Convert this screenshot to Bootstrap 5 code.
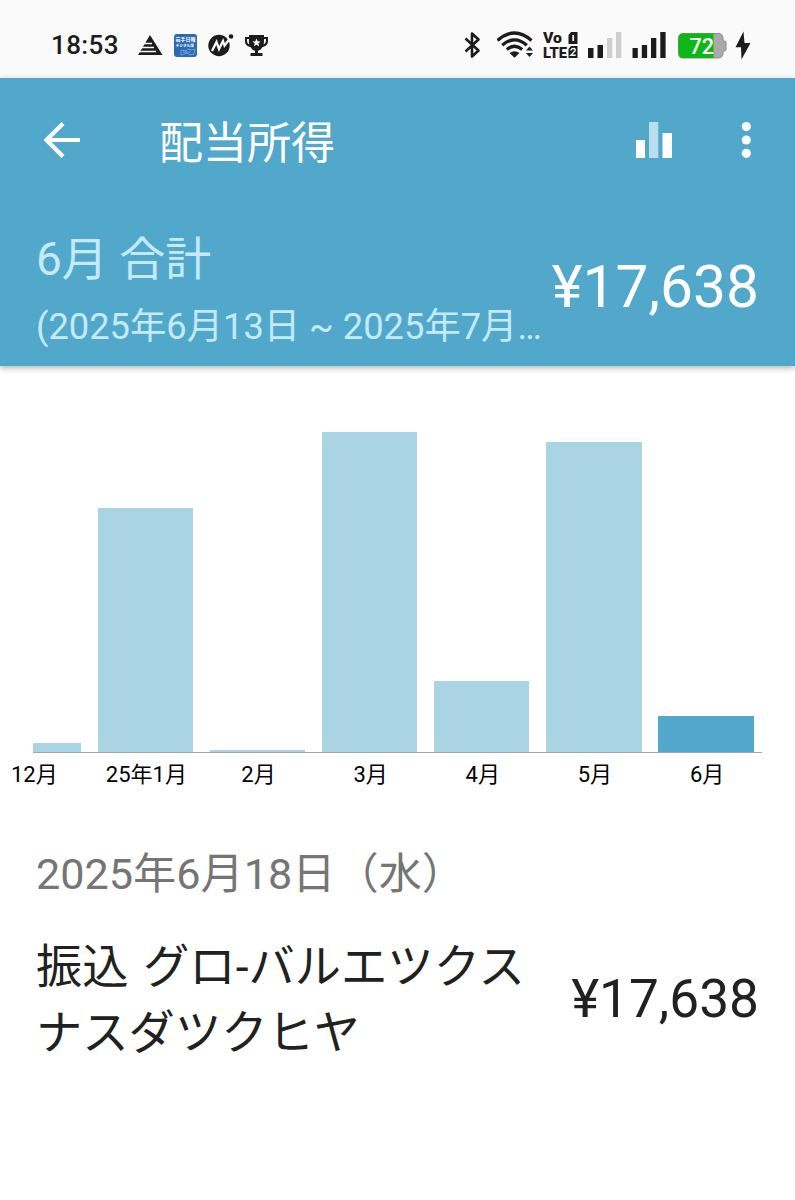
<!DOCTYPE html>
<html lang="ja">
<head>
    <meta charset="UTF-8">
    <meta name="viewport" content="width=device-width, initial-scale=1.0">
    <link href="https://cdn.jsdelivr.net/npm/bootstrap@5.3.2/dist/css/bootstrap.min.css" rel="stylesheet">
    <title>配当所得</title>
    <style>
        body {
            font-family: Roboto, "Noto Sans CJK JP", sans-serif;
            color: #212121;
            background: #fff;
            overflow-x: hidden;
        }
        svg { display: block; flex: none; }

        .status-bar { height: 78px; padding: 27px 43px 0 51px; background: #fafafa; color: #1c1c1c; }
        .status-bar svg { height: 36px; }
        .clock { width: 86px; font-size: 26px; font-weight: 500; letter-spacing: .4px; line-height: 36px; }

        .app-header { height: 288px; background: #51a8cb; color: #fff; box-shadow: 0 2px 6px rgba(0, 0, 0, .3); }
        .toolbar { height: 124px; padding: 0 43px 0 44px; }
        .toolbar-title { margin-left: 79px; font-size: 44px; font-weight: 400; line-height: 64px; letter-spacing: 0; padding-top: 8px; }
        .icon-button { padding: 0; border: 0; background: none; color: #fff; }
        .summary { padding: 23px 36px 0; }
        .summary-text { width: 508px; color: #c4eafb; }
        .summary-label { font-size: 46px; line-height: 68px; }
        .summary-range { font-size: 36.3px; line-height: 54px; margin-top: 7px; }
        .summary-total { font-size: 58.7px; line-height: 70px; margin-top: 27px; }

        .bars { height: 386px; }
        .bar-col { width: 112.15px; padding: 0 8.4px; }
        .bar-col:first-child { width: 89.3px; padding-left: 33px; }
        .bar-fill { background: #aad4e3; }
        .bar-fill.current { background: #51a8cb; }
        .axis-line { height: 1px; margin: 0 33px; background: #a5a5a5; }
        .axis { padding-top: 5px; font-size: 22px; line-height: 34px; color: #000; }
        .axis span { width: 112.15px; padding-left: 2px; text-align: center; }
        .axis span:first-child { width: 89.3px; padding-left: 11px; text-align: left; }

        .day-heading { margin: 51px 36px 0; font-size: 43.2px; font-weight: 400; line-height: 64px; color: #757575; }
        .entry { padding: 27px 36px 0; }
        .entry-name { width: 510px; font-size: 46.3px; line-height: 66px; word-spacing: 3px; }
        .entry-amount { font-size: 53.2px; line-height: 64px; margin-top: -2px; }
    </style>
</head>
<body>
    <div class="status-bar d-flex align-items-start">
        <div class="clock">18:53</div>
        <svg width="37" viewBox="137 27 37 36">
            <path d="M150 35L162.500 55H138Z" fill="#1c1c1c"/>
            <path d="M140 43.500h12M138 47.500h16M136 51.500h20" stroke="#fafafa" stroke-width="1.300"/>
        </svg>
        <svg width="33" viewBox="174 27 33 36">
            <rect x="174" y="34" width="23" height="23" rx="3" fill="#2e68b0"/>
            <text x="175.500" y="41.300" font-size="5" font-weight="700" textLength="20" fill="#fff">岩手日報</text>
            <text x="175.800" y="46.900" font-size="3.600" font-weight="700" textLength="18" fill="#fff">デジタル版</text>
            <path d="M181 55v-5l5 1 2-2 4 1 3-1-1 5-4 1-3-2zM183 52h8" fill="none" stroke="#82aee0" stroke-width=".8"/>
        </svg>
        <svg width="36" viewBox="207 27 36 36">
            <circle cx="219" cy="45.500" r="10.700" fill="#1c1c1c"/>
            <circle cx="231" cy="36.500" r="2.300" fill="#1c1c1c"/>
            <path d="M212 51l4.500-9 2.500 7 4-8 1.500 4.500 5.500-7" fill="none" stroke="#fafafa" stroke-width="2.300"/>
        </svg>
        <svg width="27" viewBox="243 27 27 36">
            <path d="M249 35h15v2h4v3.500c0 4-2 6-5.500 6.500-1 2-2.500 3.300-4.500 3.800V53h4.500v3h-12v-3h4.500v-2.200c-2-.5-3.500-1.800-4.500-3.800-3.500-.5-5.500-2.500-5.500-6.500V37h4zM247 39v1.500c0 2 .8 3.300 2.300 4-.4-1.500-.4-3.500-.4-5.500zM264 39c0 2 0 4-.4 5.500 1.500-.7 2.300-2 2.300-4V39z" fill="#1c1c1c" fill-rule="evenodd"/>
            <path d="M256.500 38.500l1.200 2.700 2.900.3-2.200 1.900.7 2.900-2.600-1.500-2.500 1.500.7-2.900-2.200-1.900 2.900-.3z" fill="#fafafa"/>
        </svg>

        <svg class="ms-auto" width="34" viewBox="463 27 34 36">
            <path d="M465.500 38.500l13 12-6.500 6V33.500l6.500 6-13 12" fill="none" stroke="#1c1c1c" stroke-width="2.600" stroke-linejoin="round"/>
        </svg>
        <svg width="46" viewBox="497 27 46 36">
            <g fill="none" stroke="#1c1c1c" stroke-width="3.200">
                <path d="M497.500 40.500Q514.500 25.500 531.500 40.500"/>
                <path d="M502.200 45.200Q514.500 34.500 526.800 45.200"/>
                <path d="M506.800 49.500Q514.500 43 522.200 49.500"/>
            </g>
            <path d="M509.500 53q5-3.700 10 0l-5 4.800zM526 50.500l3.500-4 3.500 4zM526 53l3.500 4 3.500-4z" fill="#1c1c1c"/>
        </svg>
        <svg width="45" viewBox="543 27 45 36">
            <g fill="#1c1c1c" font-weight="900" font-family="Roboto, sans-serif">
                <text x="543" y="43" font-size="14.500" textLength="19" lengthAdjust="spacingAndGlyphs">Vo</text>
                <text x="543" y="57.800" font-size="15" textLength="24" lengthAdjust="spacingAndGlyphs">LTE</text>
            </g>
            <path d="M571 32h6.500v12H568.500V35zM571 46h6.500v12H568.500V49z" fill="#1c1c1c"/>
            <path d="M573.200 35v6" stroke="#fafafa" stroke-width="1.700"/>
            <path d="M570.700 50.500q.5-2 2.500-2 2.300 0 2 2.300l-4.300 4.500h4.800" fill="none" stroke="#fafafa" stroke-width="1.400"/>
        </svg>
        <svg width="44" viewBox="588 27 44 36">
            <path d="M588 48h5.500v10H588zM597.500 45h5.500v13H597.500z" fill="#1c1c1c"/>
            <path d="M607 38h5.300v20H607zM616 32h5.300v26H616z" fill="#cfcfcf"/>
        </svg>
        <svg width="46" viewBox="632 27 46 36">
            <path d="M632.500 48h5.300v10h-5.300zM641.800 45h5.300v13h-5.300zM651 38h5.300v20H651zM660.300 32h5.300v26h-5.300z" fill="#1c1c1c"/>
        </svg>
        <svg width="56" viewBox="678 27 56 36">
            <path d="M683 33.500h35q5 0 5 5V40l3 2v8l-3 2v1q0 5-5 5h-35q-4.500 0-4.500-5V38.500q0-5 4.500-5z" fill="#aaa" stroke="#8d8d8d"/>
            <path d="M683 33.500h30.500V58H683q-4.500 0-4.500-5V38.500q0-5 4.500-5z" fill="#0db814"/>
            <text x="689.500" y="54" font-size="21.500" font-weight="500" textLength="24.500" lengthAdjust="spacingAndGlyphs" fill="#fff">72</text>
        </svg>
        <svg width="18" viewBox="734 27 18 36">
            <path d="M743.500 31.500L735.500 47.300h5.500L741.500 59.500 750.500 43h-6z" fill="#1c1c1c"/>
        </svg>
    </div>

    <header class="app-header">
        <div class="toolbar d-flex align-items-center">
            <button type="button" class="icon-button" aria-label="戻る">
                <svg width="36" height="36" viewBox="0 0 36 36">
                    <path d="M36 18H3M19 1.500L2.500 18 19 34.500" fill="none" stroke="#fff" stroke-width="4.200"/>
                </svg>
            </button>
            <h1 class="toolbar-title mb-0">配当所得</h1>
            <button type="button" class="icon-button ms-auto" aria-label="グラフ">
                <svg width="36" height="36" viewBox="0 0 36 36">
                    <path d="M0 18h9v18H0zM26.500 11H36v25h-9.500z" fill="#fff"/>
                    <path d="M13 0h9.300v36H13z" fill="#b9dfec"/>
                </svg>
            </button>
            <button type="button" class="icon-button" aria-label="メニュー">
                <svg width="80" height="36" viewBox="0 0 80 36" fill="#fff">
                    <circle cx="74.300" cy="4.600" r="4.600"/>
                    <circle cx="74.300" cy="18" r="4.600"/>
                    <circle cx="74.300" cy="31.300" r="4.600"/>
                </svg>
            </button>
        </div>
        <div class="summary d-flex justify-content-between">
            <div class="summary-text">
                <div class="summary-label">6月 合計</div>
                <div class="summary-range text-nowrap">(2025年6月13日 ~ 2025年7月…</div>
            </div>
            <div class="summary-total text-nowrap">¥17,638</div>
        </div>
    </header>

    <main>
        <section>
            <div class="bars d-flex align-items-end" id="bars"></div>
            <div class="axis-line"></div>
            <div class="axis d-flex" id="axis"></div>
        </section>

        <section>
            <h2 class="day-heading mb-0">2025年6月18日（水）</h2>
            <div class="entry d-flex justify-content-between align-items-center">
                <div class="entry-name">振込 グロ-バルエツクス<br>ナスダツクヒヤ</div>
                <div class="entry-amount text-nowrap">¥17,638</div>
            </div>
        </section>
    </main>

    <script>
        const months = [
            { label: '12月', height: 9 },
            { label: '25年1月', height: 244.5 },
            { label: '2月', height: 2 },
            { label: '3月', height: 320.5 },
            { label: '4月', height: 71.5 },
            { label: '5月', height: 310 },
            { label: '6月', height: 36.5, current: true }
        ];

        document.getElementById('bars').innerHTML = months.map(month => `
            <div class="bar-col flex-shrink-0">
                <div class="bar-fill ${month.current ? 'current' : ''}" style="height: ${month.height}px"></div>
            </div>
        `).join('');

        document.getElementById('axis').innerHTML = months.map(month => `
            <span class="flex-shrink-0">${month.label}</span>
        `).join('');
    </script>
    <script src="https://cdn.jsdelivr.net/npm/bootstrap@5.3.2/dist/js/bootstrap.bundle.min.js"></script>
</body>
</html>
